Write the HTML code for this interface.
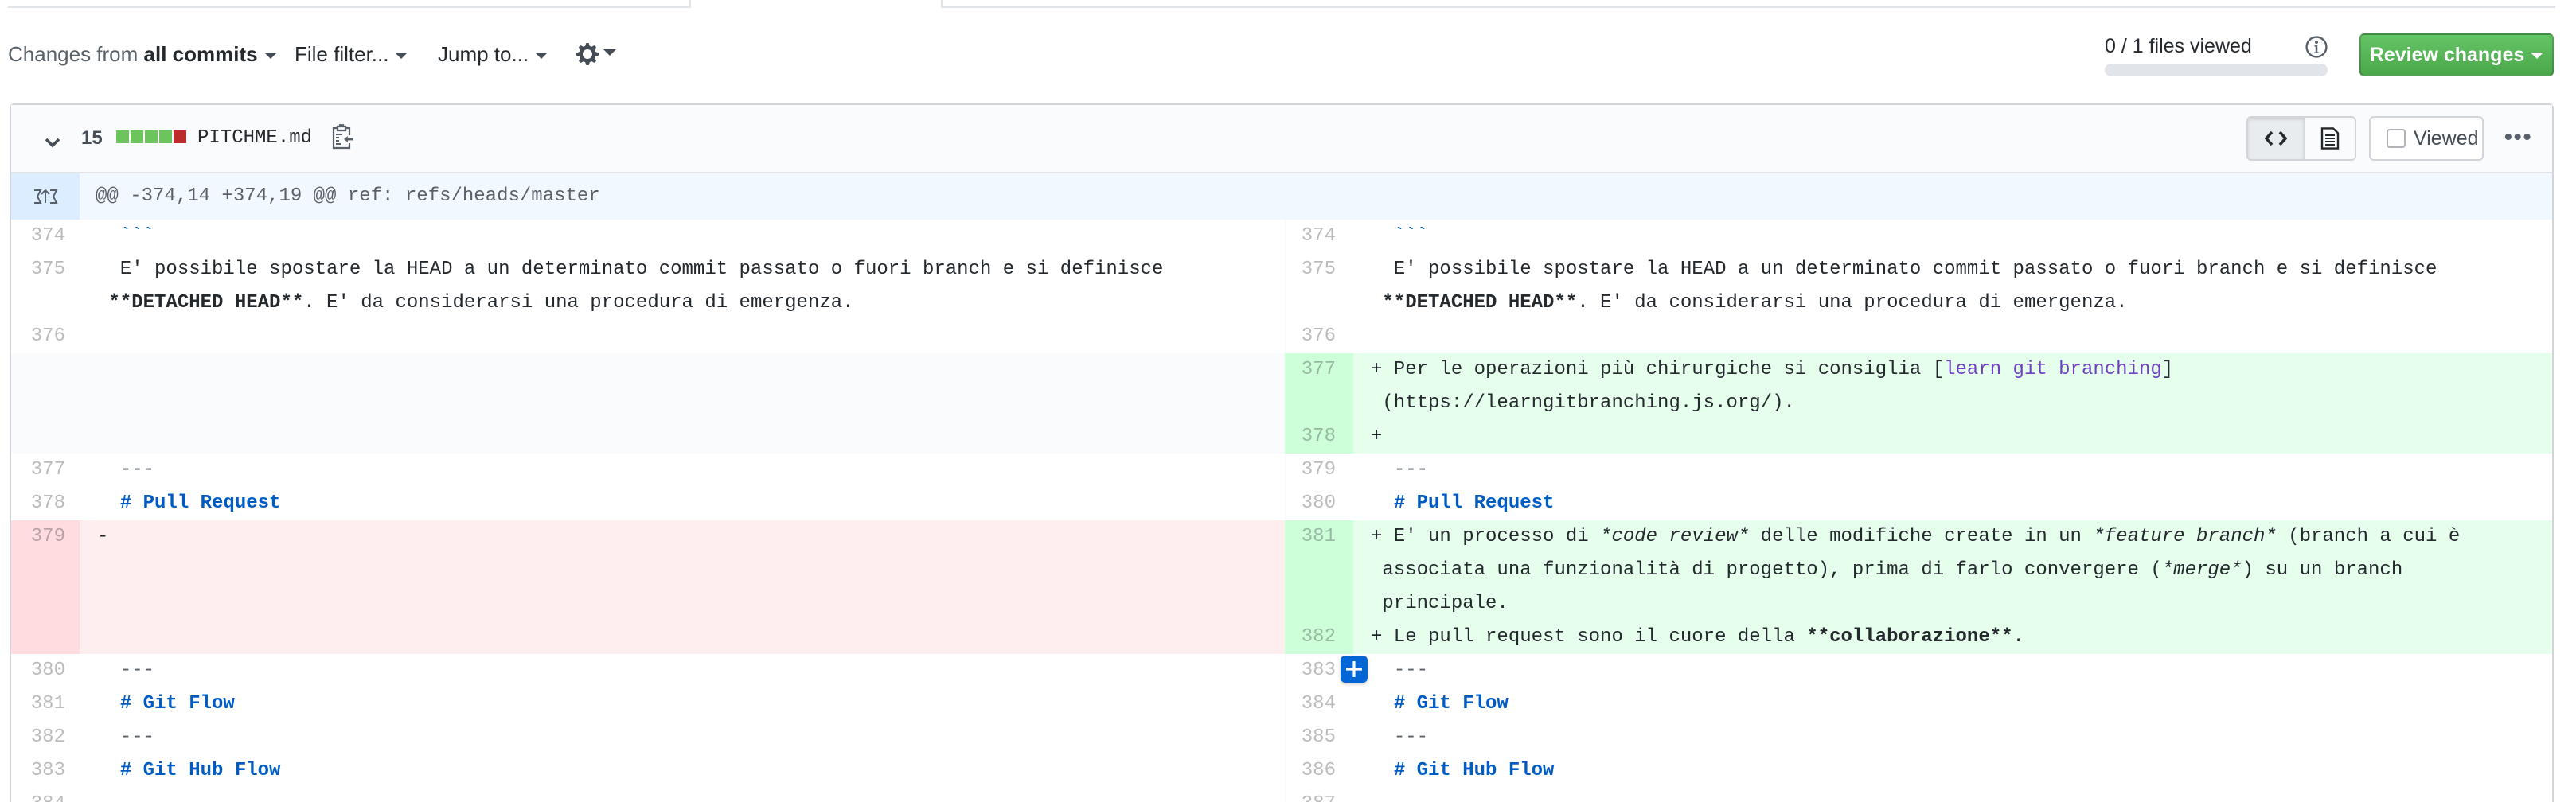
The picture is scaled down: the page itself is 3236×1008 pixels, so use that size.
<!DOCTYPE html>
<html><head><meta charset="utf-8">
<style>
html,body{margin:0;padding:0;background:#fff;}
body{width:3236px;height:1008px;overflow:hidden;}
#w{zoom:2;width:1618px;height:504px;position:relative;overflow:hidden;font-family:"Liberation Sans",sans-serif;color:#24292e;}
.a{position:absolute;}
.mono{font-family:"Liberation Mono","DejaVu Sans Mono",monospace;font-size:12px;}
.caret{display:inline-block;width:0;height:0;border-left:4px solid transparent;border-right:4px solid transparent;border-top:4px solid #444d56;vertical-align:middle;margin-left:4px;}
.tb{font-size:13px;color:#586069;top:26px;line-height:16px;}
.box{left:6px;top:65px;width:1596px;height:500px;border:1px solid #d1d5da;border-radius:3px;}
.row{display:flex;position:relative;}
.half{display:flex;flex-direction:column;}
.ln{display:flex;}
.g{width:43px;flex:none;text-align:right;padding-right:9px;box-sizing:border-box;color:rgba(27,31,35,.3);font-family:"Liberation Mono",monospace;font-size:12px;line-height:21px;}
.c{flex:1;padding-left:11px;white-space:pre;font-family:"Liberation Mono",monospace;font-size:12px;line-height:21px;color:#24292e;}
.L{width:800px;}
.R{width:796px;}
.R .g{width:43px;padding-right:11px;border-left:1px solid #f6f8fa;}
.h{color:#005cc5;font-weight:bold;}
.hr{color:#586069;}
.add .g{background:#cdffd8;}
.add .c{background:#e6ffed;}
.del .g{background:#ffdce0;}
.del .c{background:#ffeef0;}
</style></head><body><div id="w">
<div class="a" style="left:5px;top:-1px;width:428px;height:5px;border-bottom:1px solid #e1e4e8;border-right:1px solid #e1e4e8;"></div>
<div class="a" style="left:591px;top:-1px;width:1013px;height:5px;border-bottom:1px solid #e1e4e8;border-left:1px solid #e1e4e8;"></div>

<div class="a tb" style="left:5px;">Changes from <b style="color:#24292e">all commits</b><span class="caret"></span></div>
<div class="a tb" style="left:185px;color:#24292e;">File filter...<span class="caret"></span></div>
<div class="a tb" style="left:275px;color:#24292e;">Jump to...<span class="caret"></span></div>
<div class="a" style="left:362px;top:26px;">
<svg width="16" height="16" viewBox="0 0 16 16"><path fill="#444d56" d="M14 8.77v-1.6l-1.94-.64-.45-1.09.88-1.84-1.13-1.13-1.81.91-1.09-.45-.69-1.920h-1.6l-.63 1.94-1.11.45-1.84-.88-1.13 1.13.91 1.81-.45 1.09L0 7.23v1.59l1.94.64.45 1.09-.88 1.84 1.13 1.13 1.81-.91 1.09.45.69 1.92h1.59l.63-1.94 1.11-.45 1.84.88 1.13-1.13-.92-1.81.47-1.09L14 8.750zM7 11c-1.66 0-3-1.34-3-3s1.34-3 3-3 3 1.34 3 3-1.34 3-3 3z"/></svg><span class="caret" style="margin-left:1px;margin-top:-10px"></span></div>

<div class="a" style="left:1322px;top:21px;font-size:12.5px;line-height:16px;">0 / 1 files viewed</div>
<div class="a" style="left:1322px;top:40px;width:140px;height:8px;border-radius:4px;background:#e1e4e8;"></div>
<div class="a" style="left:1448px;top:22px;"><svg width="14" height="14" viewBox="0 0 14 14"><circle cx="7" cy="7" r="6.2" fill="none" stroke="#586069" stroke-width="1.2"/><circle cx="7" cy="4" r="1" fill="#586069"/><path d="M5.8 6h1.8v4.2h.8v.8H5.6v-.8h.8V6.8h-.6z" fill="#586069"/></svg></div>
<div class="a" style="left:1482px;top:21px;width:122px;height:27px;box-sizing:border-box;border:1px solid rgba(27,31,35,.2);border-radius:3px;background:linear-gradient(#65c465,#4aa84a);color:#fff;font-weight:bold;font-size:12.5px;line-height:25px;text-align:center;">Review changes<span class="caret" style="border-top-color:#fff"></span></div>

<div class="a box">
 <div style="height:42px;background:#fafbfc;border-bottom:1px solid #e1e4e8;position:relative;">
  <div class="a" style="left:20px;top:15px;"><svg width="12" height="12" viewBox="0 0 12 12"><path d="M2 4l4 4 4-4" fill="none" stroke="#444d56" stroke-width="1.8"/></svg></div>
  <div class="a" style="left:44px;top:13px;font-size:12px;font-weight:bold;line-height:16px;color:#444d56">15</div>
  <div class="a" style="left:66px;top:16px;display:flex;gap:1px;">
   <span style="width:8px;height:8px;background:#6cc45c"></span><span style="width:8px;height:8px;background:#6cc45c"></span><span style="width:8px;height:8px;background:#6cc45c"></span><span style="width:8px;height:8px;background:#6cc45c"></span><span style="width:8px;height:8px;background:#bd2c2c"></span></div>
  <div class="a mono" style="left:117px;top:13px;line-height:16px;">PITCHME.md</div>
  <div class="a" style="left:201px;top:12px;"><svg width="14" height="16" viewBox="0 0 14 16"><path fill="none" stroke="#586069" stroke-width="1.1" d="M4 2.5H1.5v12.5h10v-3M11.5 7V2.5H9M4 1.5h5v2.5H4zM5.5 1.5V.6h2v.9"/><path fill="#586069" d="M3 6h4v1H3zM3 8h2v1H3zM3 10h2v1H3zM3 12h3v1H3zM8 9.5l2.5-2v1.3H14v1.4h-3.5v1.3z"/></svg></div>
  <div class="a" style="left:1404px;top:7px;width:69px;height:28px;box-sizing:border-box;border:1px solid #d1d5da;border-radius:3px;display:flex;overflow:hidden;">
   <div style="width:35px;background:#e9ecef;border-right:1px solid #d1d5da;display:flex;align-items:center;justify-content:center;box-shadow:inset 0 1px 2px rgba(0,0,0,.12)"><svg width="14" height="12" viewBox="0 0 14 12"><path d="M4.5 2L1 6l3.5 4M9.5 2L13 6l-3.5 4" fill="none" stroke="#24292e" stroke-width="1.8"/></svg></div>
   <div style="flex:1;background:#fafbfc;display:flex;align-items:center;justify-content:center;"><svg width="12" height="14" viewBox="0 0 12 14"><path d="M1 .7h7l3 3v9.6H1z" fill="none" stroke="#24292e" stroke-width="1.2"/><path d="M3 5h6M3 7h6M3 9h6M3 11h6" stroke="#24292e" stroke-width="1"/></svg></div>
  </div>
  <div class="a" style="left:1481px;top:7px;width:72px;height:28px;box-sizing:border-box;border:1px solid #d1d5da;border-radius:3px;background:#fff;font-size:12.5px;line-height:26px;color:#444d56;">
   <span style="position:absolute;left:10px;top:7px;width:12px;height:12px;border:1px solid #b0b4b8;border-radius:2px;box-sizing:border-box;"></span><span style="position:absolute;left:27px;">Viewed</span></div>
  <div class="a" style="left:1566px;top:12px;font-size:14px;font-weight:bold;color:#586069;letter-spacing:1px;">•••</div>
 </div>
 <div class="row" style="height:29px;">
  <div style="width:43px;background:#dbedff;display:flex;align-items:center;justify-content:center;"><svg width="16" height="12" viewBox="0 0 16 12"><path d="M1 2h4L3 6l2 4H1M8 10V2M5.5 4.5L8 2l2.5 2.5M11 2h4l-2 4 2 4h-4" fill="none" stroke="#586069" stroke-width="1"/></svg></div>
  <div class="mono" style="flex:1;background:#f1f8ff;color:rgba(27,31,35,.7);line-height:29px;padding-left:10px;">@@ -374,14 +374,19 @@ ref: refs/heads/master</div>
 </div>

 <div class="row"><div class="half L"><div class="ln"><div class="g">374</div><div class="c">  <span style="color:#005cc5">&#96;&#96;&#96;</span></div></div></div><div class="half R"><div class="ln"><div class="g">374</div><div class="c">  <span style="color:#005cc5">&#96;&#96;&#96;</span></div></div></div></div>

 <div class="row"><div class="half L"><div class="ln"><div class="g">375</div><div class="c">  E' possibile spostare la HEAD a un determinato commit passato o fuori branch e si definisce
 <b>**DETACHED HEAD**</b>. E' da considerarsi una procedura di emergenza.</div></div></div><div class="half R"><div class="ln"><div class="g">375</div><div class="c">  E' possibile spostare la HEAD a un determinato commit passato o fuori branch e si definisce
 <b>**DETACHED HEAD**</b>. E' da considerarsi una procedura di emergenza.</div></div></div></div>

 <div class="row"><div class="half L"><div class="ln"><div class="g">376</div><div class="c"> </div></div></div><div class="half R"><div class="ln"><div class="g">376</div><div class="c"> </div></div></div></div>

 <div class="row"><div class="half L" style="background:#fafbfc;height:63px;"></div><div class="half R">
  <div class="ln add"><div class="g" style="border-left-color:#cdffd8">377</div><div class="c">+ Per le operazioni più chirurgiche si consiglia [<span style="color:#6f42c1">learn git branching</span>]
 (https://learngitbranching.js.org/).</div></div>
  <div class="ln add"><div class="g" style="border-left-color:#cdffd8">378</div><div class="c">+</div></div></div></div>

 <div class="row"><div class="half L"><div class="ln"><div class="g">377</div><div class="c">  <span class="hr">---</span></div></div></div><div class="half R"><div class="ln"><div class="g">379</div><div class="c">  <span class="hr">---</span></div></div></div></div>
 <div class="row"><div class="half L"><div class="ln"><div class="g">378</div><div class="c">  <span class="h"># Pull Request</span></div></div></div><div class="half R"><div class="ln"><div class="g">380</div><div class="c">  <span class="h"># Pull Request</span></div></div></div></div>

 <div class="row"><div class="half L"><div class="ln del" style="height:84px;"><div class="g">379</div><div class="c">-</div></div></div><div class="half R">
  <div class="ln add"><div class="g" style="border-left-color:#cdffd8">381</div><div class="c">+ E' un processo di <i>*code review*</i> delle modifiche create in un <i>*feature branch*</i> (branch a cui è
 associata una funzionalità di progetto), prima di farlo convergere (<i>*merge*</i>) su un branch
 principale.</div></div>
  <div class="ln add"><div class="g" style="border-left-color:#cdffd8">382</div><div class="c">+ Le pull request sono il cuore della <b>**collaborazione**</b>.</div></div></div></div>

 <div class="row"><div class="half L"><div class="ln"><div class="g">380</div><div class="c">  <span class="hr">---</span></div></div></div><div class="half R"><div class="ln"><div class="g">383</div><div class="c">  <span class="hr">---</span></div></div></div>
  <div class="a" style="left:835px;top:1px;width:17px;height:17px;background:#0366d6;border-radius:3px;box-shadow:0 1px 2px rgba(0,0,0,.2);"><svg width="17" height="17" viewBox="0 0 17 17"><path d="M8.5 3.5v10M3.5 8.5h10" stroke="#fff" stroke-width="1.6"/></svg></div></div>
 <div class="row"><div class="half L"><div class="ln"><div class="g">381</div><div class="c">  <span class="h"># Git Flow</span></div></div></div><div class="half R"><div class="ln"><div class="g">384</div><div class="c">  <span class="h"># Git Flow</span></div></div></div></div>
 <div class="row"><div class="half L"><div class="ln"><div class="g">382</div><div class="c">  <span class="hr">---</span></div></div></div><div class="half R"><div class="ln"><div class="g">385</div><div class="c">  <span class="hr">---</span></div></div></div></div>
 <div class="row"><div class="half L"><div class="ln"><div class="g">383</div><div class="c">  <span class="h"># Git Hub Flow</span></div></div></div><div class="half R"><div class="ln"><div class="g">386</div><div class="c">  <span class="h"># Git Hub Flow</span></div></div></div></div>
 <div class="row"><div class="half L"><div class="ln"><div class="g">384</div><div class="c"> </div></div></div><div class="half R"><div class="ln"><div class="g">387</div><div class="c"> </div></div></div></div>
</div>
</div></body></html>
